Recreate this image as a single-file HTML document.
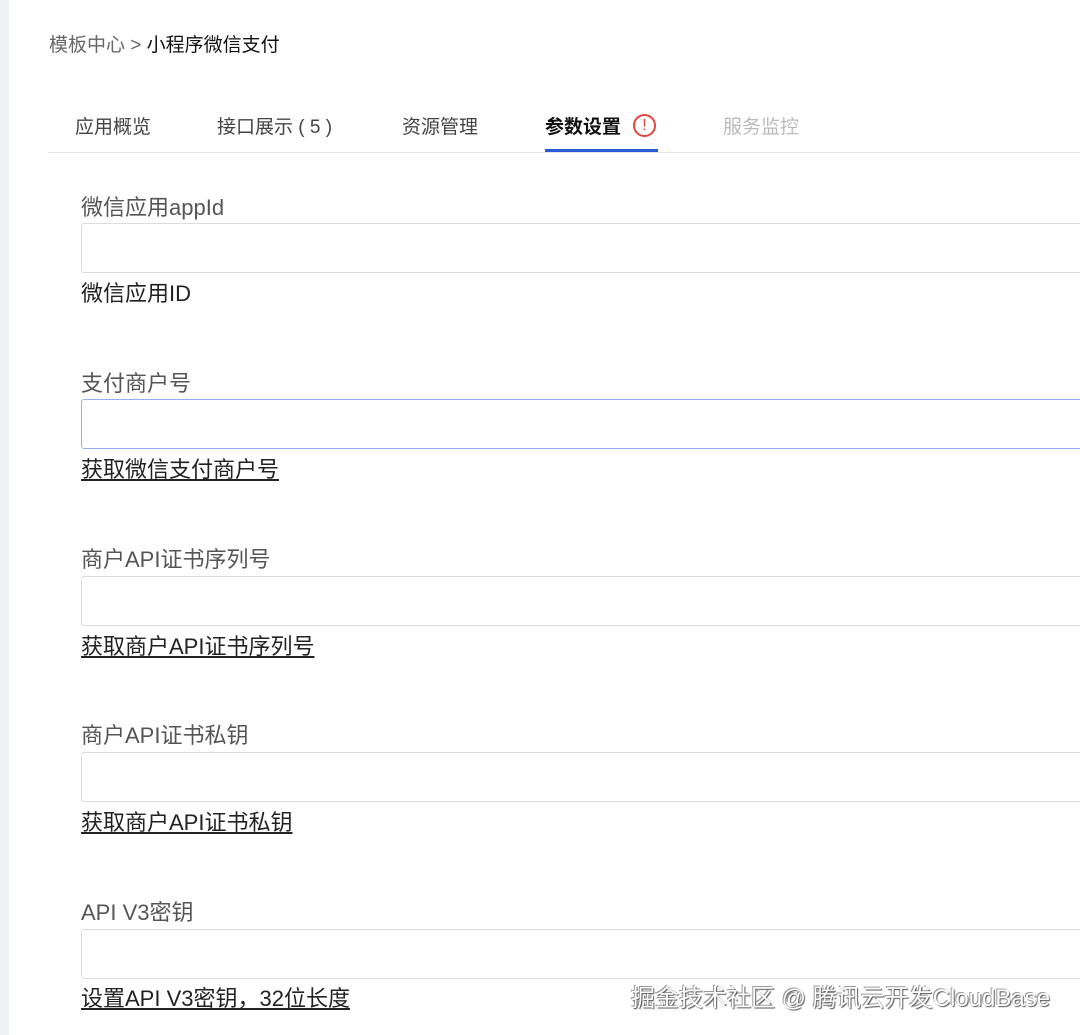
<!DOCTYPE html>
<html><head><meta charset="utf-8"><style>
body{margin:0;width:1080px;height:1035px;overflow:hidden;background:#fff;font-family:"Liberation Sans","Noto Sans CJK SC",sans-serif;position:relative}
.strip{position:absolute;left:0;top:0;width:9px;height:1035px;background:#eef0f4}
.bc{position:absolute;left:49px;top:30px;font-size:19px;color:#666}
.bc b{font-weight:normal;color:#111}
.tab{position:absolute;top:112px;font-size:19px;color:#444}
.line{position:absolute;left:48px;right:0;top:152px;height:1px;background:#e8e8e8}
.lab{position:absolute;left:81px;font-size:22px;color:#555}
.inp{position:absolute;left:81px;width:1010px;height:50px;border:1px solid #dcdcdc;border-radius:3px;box-sizing:border-box}
.help{position:absolute;left:81px;font-size:22px;color:#222;text-decoration:underline}
.wm{position:absolute;left:631px;top:978px;font-size:24px;color:#fff;text-shadow:1px 1px 1px #555,-1px -1px 0 #999}
</style></head><body>
<div class="strip"></div>
<div class="bc">模板中心 &gt; <b>小程序微信支付</b></div>
<div class="tab" style="left:75px">应用概览</div>
<div class="tab" style="left:217px">接口展示 ( 5 )</div>
<div class="tab" style="left:402px">资源管理</div>
<div class="tab" style="left:545px;color:#111;font-weight:bold">参数设置</div>
<div style="position:absolute;left:633px;top:114px;width:23px;height:23px;border:2px solid #e0463c;border-radius:50%;color:#e0463c;font-size:16px;text-align:center;line-height:19px;box-sizing:border-box">!</div>
<div class="tab" style="left:723px;color:#bbb">服务监控</div>
<div class="line"></div>
<div style="position:absolute;left:545px;top:149px;width:113px;height:3px;background:#2a5bd7"></div>

<div class="lab" style="top:190px">微信应用appId</div>
<div class="inp" style="top:223px"></div>
<div class="help" style="top:276px;text-decoration:none">微信应用ID</div>

<div class="lab" style="top:366px">支付商户号</div>
<div class="inp" style="top:399px;border-color:#8fb3e8"></div>
<div class="help" style="top:452px">获取微信支付商户号</div>

<div class="lab" style="top:542px">商户API证书序列号</div>
<div class="inp" style="top:576px"></div>
<div class="help" style="top:629px">获取商户API证书序列号</div>

<div class="lab" style="top:718px">商户API证书私钥</div>
<div class="inp" style="top:752px"></div>
<div class="help" style="top:805px">获取商户API证书私钥</div>

<div class="lab" style="top:895px">API V3密钥</div>
<div class="inp" style="top:929px"></div>
<div class="help" style="top:981px">设置API V3密钥，32位长度</div>

<div class="wm">掘金技术社区 @ 腾讯云开发CloudBase</div>
</body></html>
